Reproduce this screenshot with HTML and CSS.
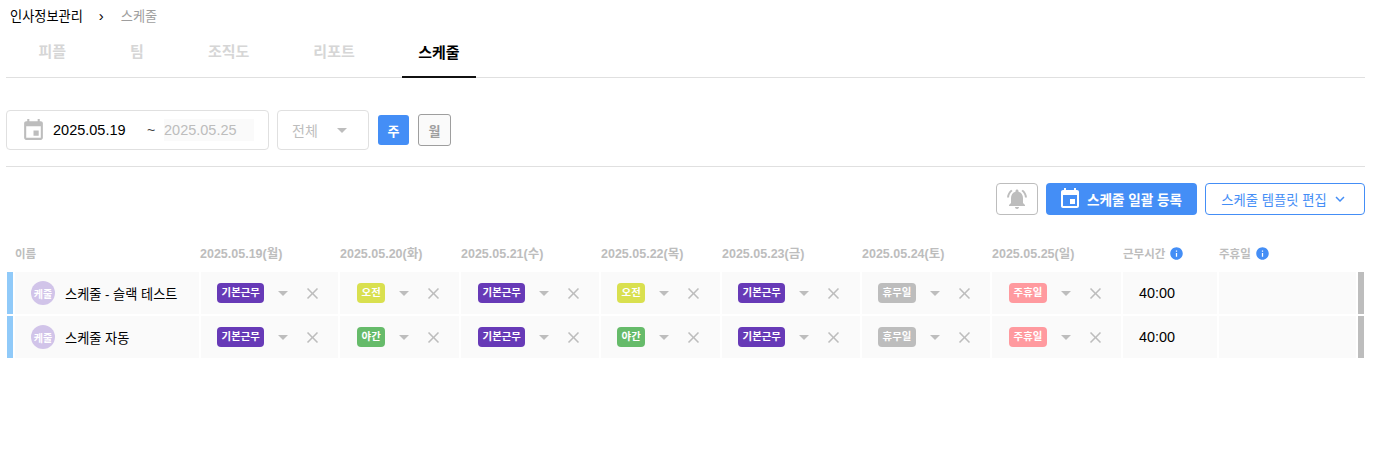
FILE: index.html
```html
<!DOCTYPE html>
<html lang="ko">
<head>
    <meta charset="UTF-8">
    <title>스케줄</title>
    <link rel="stylesheet" href="styles.css">
</head>
<body>
    <svg class="sprite" width="0" height="0">
        <symbol id="i-event" viewBox="0 0 24 24"><path d="M17 12h-5v5h5v-5zM16 1v2H8V1H6v2H5c-1.11 0-1.99.9-1.99 2L3 19c0 1.1.89 2 2 2h14c1.1 0 2-.9 2-2V5c0-1.1-.9-2-2-2h-1V1h-2zm3 18H5V8h14v11z"/></symbol>
        <symbol id="i-bell" viewBox="0 0 24 24"><path d="M7.58 4.08L6.15 2.65C3.75 4.48 2.17 7.3 2.03 10.5h2c.15-2.65 1.51-4.97 3.55-6.42zm12.39 6.42h2c-.15-3.2-1.73-6.02-4.12-7.85l-1.42 1.43c2.02 1.45 3.39 3.77 3.54 6.42zM18 11c0-3.07-1.64-5.64-4.5-6.32V4c0-.83-.67-1.5-1.5-1.5s-1.5.67-1.5 1.5v.68C7.63 5.36 6 7.92 6 11v5l-2 2v1h16v-1l-2-2v-5zm-6 11c.14 0 .27-.01.4-.04.65-.14 1.18-.58 1.44-1.18.1-.24.15-.5.15-.78h-4c.01 1.1.9 2 2.01 2z"/></symbol>
        <symbol id="i-info" viewBox="0 0 24 24"><path d="M12 2C6.48 2 2 6.48 2 12s4.48 10 10 10 10-4.48 10-10S17.52 2 12 2zm1 15h-2v-6h2v6zm0-8h-2V7h2v2z"/></symbol>
        <symbol id="i-close" viewBox="0 0 24 24"><path d="M19 6.41L17.59 5 12 10.59 6.41 5 5 6.41 10.59 12 5 17.59 6.41 19 12 13.41 17.59 19 19 17.59 13.41 12z"/></symbol>
        <symbol id="i-down" viewBox="0 0 24 24"><path d="M7.41 8.59L12 13.17l4.59-4.58L18 10l-6 6-6-6z"/></symbol>
    </svg>

    <div class="page">
        <!-- Breadcrumb -->
        <nav class="crumbs">
            <span>인사정보관리</span>
            <span class="crumb_sep">›</span>
            <span class="crumb_now">스케줄</span>
        </nav>

        <!-- Tabs -->
        <div class="tabs">
            <a class="tab">피플</a>
            <a class="tab">팀</a>
            <a class="tab">조직도</a>
            <a class="tab">리포트</a>
            <a class="tab tab_active">스케줄</a>
        </div>

        <!-- Filters -->
        <div class="filters">
            <div class="date_box">
                <svg class="date_icon"><use href="#i-event"/></svg>
                <span class="date_from">2025.05.19</span>
                <span class="date_tilde">~</span>
                <span class="date_to">2025.05.25</span>
            </div>
            <div class="select_box">
                <span>전체</span>
                <i class="caret"></i>
            </div>
            <button class="btn_week">주</button>
            <button class="btn_month">월</button>
        </div>

        <!-- Actions -->
        <div class="actions">
            <button class="btn_bell"><svg><use href="#i-bell"/></svg></button>
            <button class="btn_bulk"><svg><use href="#i-event"/></svg>스케줄 일괄 등록</button>
            <button class="btn_template">스케줄 템플릿 편집<svg><use href="#i-down"/></svg></button>
        </div>

        <!-- Schedule table -->
        <div class="grid">
            <div class="th"></div>
            <div class="th th_label">이름</div>
            <div class="th th_first">2025.05.19(월)</div>
            <div class="th">2025.05.20(화)</div>
            <div class="th">2025.05.21(수)</div>
            <div class="th">2025.05.22(목)</div>
            <div class="th">2025.05.23(금)</div>
            <div class="th">2025.05.24(토)</div>
            <div class="th">2025.05.25(일)</div>
            <div class="th th_label">근무시간 <svg class="info"><use href="#i-info"/></svg></div>
            <div class="th th_label">주휴일 <svg class="info"><use href="#i-info"/></svg></div>
            <div class="th"></div>

            <div class="row_bar"></div>
            <div class="cell cell_name"><span class="avatar">케줄</span>스케줄 - 슬랙 테스트</div>
            <div class="cell"><span class="badge b_base">기본근무</span><i class="caret"></i><svg class="close"><use href="#i-close"/></svg></div>
            <div class="cell cell_wide"><span class="badge b_am">오전</span><i class="caret"></i><svg class="close"><use href="#i-close"/></svg></div>
            <div class="cell cell_wide"><span class="badge b_base">기본근무</span><i class="caret"></i><svg class="close"><use href="#i-close"/></svg></div>
            <div class="cell"><span class="badge b_am">오전</span><i class="caret"></i><svg class="close"><use href="#i-close"/></svg></div>
            <div class="cell"><span class="badge b_base">기본근무</span><i class="caret"></i><svg class="close"><use href="#i-close"/></svg></div>
            <div class="cell"><span class="badge b_off">휴무일</span><i class="caret"></i><svg class="close"><use href="#i-close"/></svg></div>
            <div class="cell cell_wide"><span class="badge b_week">주휴일</span><i class="caret"></i><svg class="close"><use href="#i-close"/></svg></div>
            <div class="cell cell_time">40:00</div>
            <div class="cell"></div>
            <div class="row_end"></div>

            <div class="row_bar"></div>
            <div class="cell cell_name"><span class="avatar">케줄</span>스케줄 자동</div>
            <div class="cell"><span class="badge b_base">기본근무</span><i class="caret"></i><svg class="close"><use href="#i-close"/></svg></div>
            <div class="cell cell_wide"><span class="badge b_night">야간</span><i class="caret"></i><svg class="close"><use href="#i-close"/></svg></div>
            <div class="cell cell_wide"><span class="badge b_base">기본근무</span><i class="caret"></i><svg class="close"><use href="#i-close"/></svg></div>
            <div class="cell"><span class="badge b_night">야간</span><i class="caret"></i><svg class="close"><use href="#i-close"/></svg></div>
            <div class="cell"><span class="badge b_base">기본근무</span><i class="caret"></i><svg class="close"><use href="#i-close"/></svg></div>
            <div class="cell"><span class="badge b_off">휴무일</span><i class="caret"></i><svg class="close"><use href="#i-close"/></svg></div>
            <div class="cell cell_wide"><span class="badge b_week">주휴일</span><i class="caret"></i><svg class="close"><use href="#i-close"/></svg></div>
            <div class="cell cell_time">40:00</div>
            <div class="cell"></div>
            <div class="row_end"></div>
        </div>
    </div>
</body>
</html>
```
FILE: styles.css
```css
body {
    margin: 0;
    background-color: #fff;
    color: #000;
    font-family: "Liberation Sans", "Noto Sans CJK KR", sans-serif;
}

.sprite {
    position: absolute;
}

.page {
    width: 1359px;
    margin-left: 6px;
}

/* Breadcrumb */
.crumbs {
    display: flex;
    align-items: center;
    height: 20px;
    padding: 5px 0 0 4px;
    margin-bottom: 1px;
    font-size: 13.2px;
}

.crumb_sep {
    margin: 0 17px 0 16px;
    font-size: 15px;
}

.crumb_now {
    color: #9e9e9e;
}

/* Tabs */
.tabs {
    display: flex;
    gap: 31px;
    height: 51px;
    padding-left: 16px;
    border-bottom: 1px solid #e0e0e0;
}

.tab {
    display: flex;
    align-items: center;
    padding: 0 16.5px 2px;
    font-size: 15px;
    font-weight: 700;
    color: #d6d6d6;
}

.tab_active {
    color: #000;
    border-bottom: 2px solid #111;
    margin-bottom: -1px;
    padding: 0 16px;
}

/* Filters */
.filters {
    display: flex;
    align-items: center;
    height: 40px;
    margin-top: 32px;
    padding-bottom: 16px;
    border-bottom: 1px solid #e0e0e0;
}

.date_box {
    display: flex;
    align-items: center;
    box-sizing: border-box;
    width: 263px;
    height: 40px;
    padding-left: 14px;
    border: 1px solid #e0e0e0;
    border-radius: 4px;
    font-size: 14.5px;
}

.date_icon {
    width: 25px;
    height: 25px;
    fill: #bdbdbd;
}

.date_from {
    margin-left: 7px;
    width: 94px;
}

.date_tilde {
    width: 17px;
    font-size: 14px;
    color: #424242;
}

.date_to {
    width: 90px;
    line-height: 22px;
    background-color: #fafafa;
    color: #bdbdbd;
}

.select_box {
    display: flex;
    align-items: center;
    box-sizing: border-box;
    width: 92px;
    height: 40px;
    margin-left: 8px;
    padding-left: 14px;
    border: 1px solid #e0e0e0;
    border-radius: 4px;
    font-size: 14px;
    color: #bdbdbd;
}

.select_box .caret {
    margin-left: 19px;
}

.caret {
    display: inline-block;
    width: 0;
    height: 0;
    border-left: 5px solid transparent;
    border-right: 5px solid transparent;
    border-top: 5px solid #bdbdbd;
}

.btn_week,
.btn_month {
    padding: 0;
    font-family: inherit;
    font-size: 13px;
    font-weight: 700;
    border-radius: 3px;
}

.btn_week {
    width: 31px;
    height: 30px;
    margin-left: 9px;
    border: 0;
    background-color: #448ef6;
    color: #fff;
}

.btn_month {
    width: 33px;
    height: 32px;
    margin-left: 9px;
    border: 1px solid #9e9e9e;
    background-color: #fafafa;
    color: #9e9e9e;
}

/* Actions */
.actions {
    display: flex;
    justify-content: flex-end;
    gap: 8px;
    height: 32px;
    margin-top: 16px;
}

.actions button {
    display: flex;
    align-items: center;
    justify-content: center;
    box-sizing: border-box;
    height: 32px;
    padding: 0;
    font-family: inherit;
    font-size: 13.3px;
    border-radius: 4px;
}

.btn_bell {
    width: 42px;
    background-color: #fff;
    border: 1px solid #bdbdbd;
}

.btn_bell svg {
    width: 24px;
    height: 24px;
    fill: #bdbdbd;
}

.actions .btn_bulk {
    width: 151px;
    border: 0;
    background-color: #448ef6;
    color: #fff;
    font-size: 13.6px;
    font-weight: 700;
}

.btn_bulk svg {
    width: 24px;
    height: 24px;
    margin: 0 5px 0 2px;
    margin-left: -3px;
    fill: #fff;
}

.btn_template {
    width: 160px;
    background-color: #fff;
    border: 1px solid #448ef6;
    color: #448ef6;
}

.btn_template svg {
    width: 18px;
    height: 18px;
    margin-left: 4px;
    fill: #448ef6;
}

/* Schedule table */
.grid {
    display: grid;
    grid-template-columns: 6px 184px 137px 119px 138px 119px 138px 128px 129px 94px 137px 6px;
    grid-template-rows: 24px;
    grid-auto-rows: 42px;
    gap: 2px;
    margin: 31px 0 0 1px;
}

.th {
    display: flex;
    align-items: flex-start;
    gap: 4px;
    line-height: 16px;
    font-size: 12.5px;
    font-weight: 700;
    color: #bdbdbd;
    white-space: nowrap;
}

.th_label {
    font-size: 11.5px;
}

.th_first {
    margin-left: -1px;
}

.info {
    width: 15px;
    height: 15px;
    fill: #448ef6;
}

.row_bar {
    background-color: #90caf9;
}

.row_end {
    background-color: #bdbdbd;
}

.cell {
    display: flex;
    align-items: center;
    padding-left: 16px;
    background-color: #fafafa;
    font-size: 13.2px;
}

.cell_wide {
    padding-left: 17px;
}

.cell_time {
    font-size: 14.4px;
}

.avatar {
    display: flex;
    align-items: center;
    justify-content: center;
    width: 24px;
    height: 24px;
    margin-right: 10px;
    border-radius: 50%;
    background-color: #d1c4e9;
    color: #fff;
    font-size: 10px;
    font-weight: 700;
}

.badge {
    padding: 0 4.6px;
    height: 20px;
    line-height: 20px;
    border-radius: 4px;
    color: #fff;
    font-size: 10.4px;
    font-weight: 700;
    white-space: nowrap;
}

.b_base { background-color: #673ab7; }
.b_am { background-color: #d9e04f; }
.b_night { background-color: #66bb6a; }
.b_off { background-color: #bdbdbd; }
.b_week { background-color: #ff9a9f; }

.cell .caret {
    margin-left: 14px;
}

.close {
    width: 19px;
    height: 19px;
    margin-left: 15px;
    fill: #bdbdbd;
}
```
